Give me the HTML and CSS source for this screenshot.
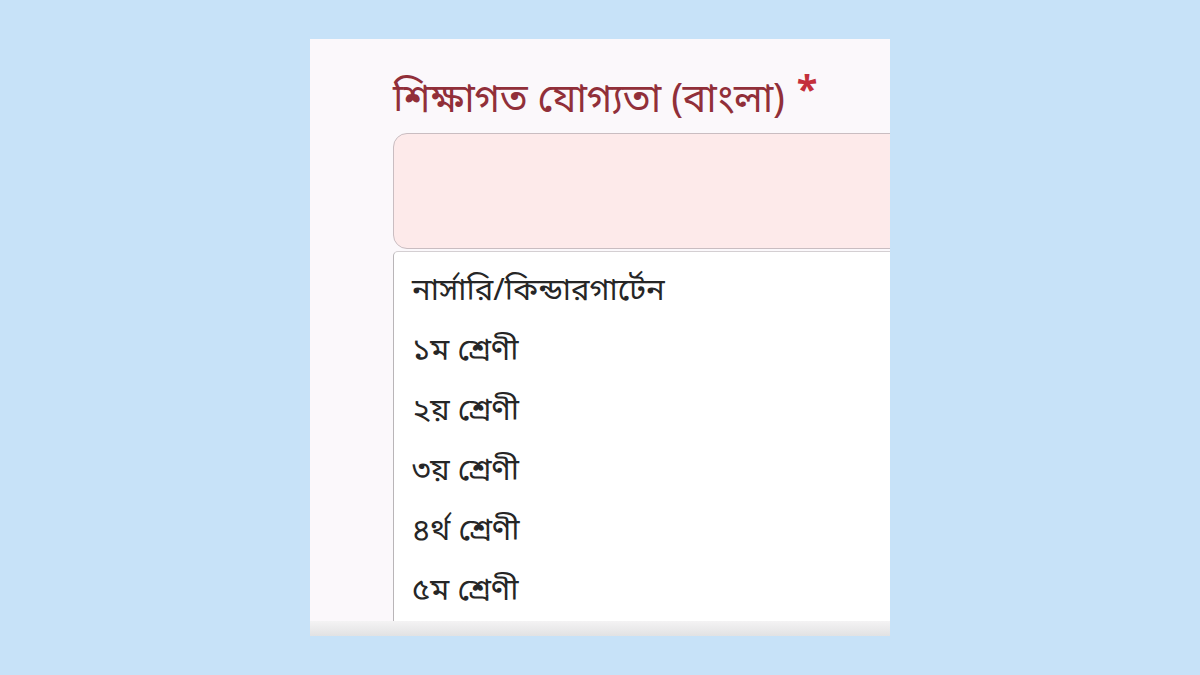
FILE: index.html
```html
<!DOCTYPE html>
<html lang="bn">
<head>
<meta charset="utf-8">
<link rel="stylesheet" href="styles.css">
</head>
<body>
<div class="stage">
  <div class="card">
    <div class="field">
      <div class="label">শিক্ষাগত যোগ্যতা (বাংলা) <span class="req">*</span></div>
      <div class="input"></div>
      <ul class="list">
        <li>নার্সারি/কিন্ডারগার্টেন</li>
        <li>১ম শ্রেণী</li>
        <li>২য় শ্রেণী</li>
        <li>৩য় শ্রেণী</li>
        <li>৪র্থ শ্রেণী</li>
        <li>৫ম শ্রেণী</li>
      </ul>
    </div>
    <div class="bottom"></div>
  </div>
</div>
</body>
</html>
```

FILE: styles.css
```css
html, body {
  margin: 0;
  padding: 0;
  width: 1200px;
  height: 675px;
  background: #c7e2f8;
  overflow: hidden;
  font-family: "Noto Sans", "Noto Sans Bengali", "Lohit Bengali", sans-serif;
}
.stage {
  padding-top: 39px;
  padding-left: 310px;
}
.card {
  width: 580px;
  height: 597px;
  background: #fbf8fb;
  overflow: hidden;
  display: flex;
  flex-direction: column;
}
.field {
  padding-left: 83px;
  padding-top: 21px;
  flex: 1;
  min-height: 0;
  overflow: hidden;
  display: flex;
  flex-direction: column;
}
.label {
  color: #912f39;
  font-size: 39.5px;
  line-height: 56px;
  height: 73px;
  white-space: nowrap;
  letter-spacing: -0.2px;
}
.req {
  color: #c4303c;
  font-size: 38px;
  font-weight: bold;
  vertical-align: 9px;
  margin-left: 2px;
}
.input {
  flex: none;
  height: 114px;
  margin-right: -20px;
  background: #fdeaea;
  border: 1.5px solid #c9bdc1;
  border-radius: 14px;
}
.list {
  list-style: none;
  margin: 2px -20px 0 0;
  padding: 6px 0 0 18px;
  background: #ffffff;
  border-left: 1.5px solid #b9b5b8;
  border-top: 1.5px solid #d4cfd2;
  border-top-left-radius: 5px;
  flex: 1;
  min-height: 0;
  overflow: hidden;
}
.list li {
  font-size: 31px;
  line-height: 60px;
  height: 60px;
  color: #262626;
  white-space: nowrap;
}
.bottom {
  flex: none;
  height: 15px;
  background: linear-gradient(#f4f3f4, #e2e2e3);
}
```
